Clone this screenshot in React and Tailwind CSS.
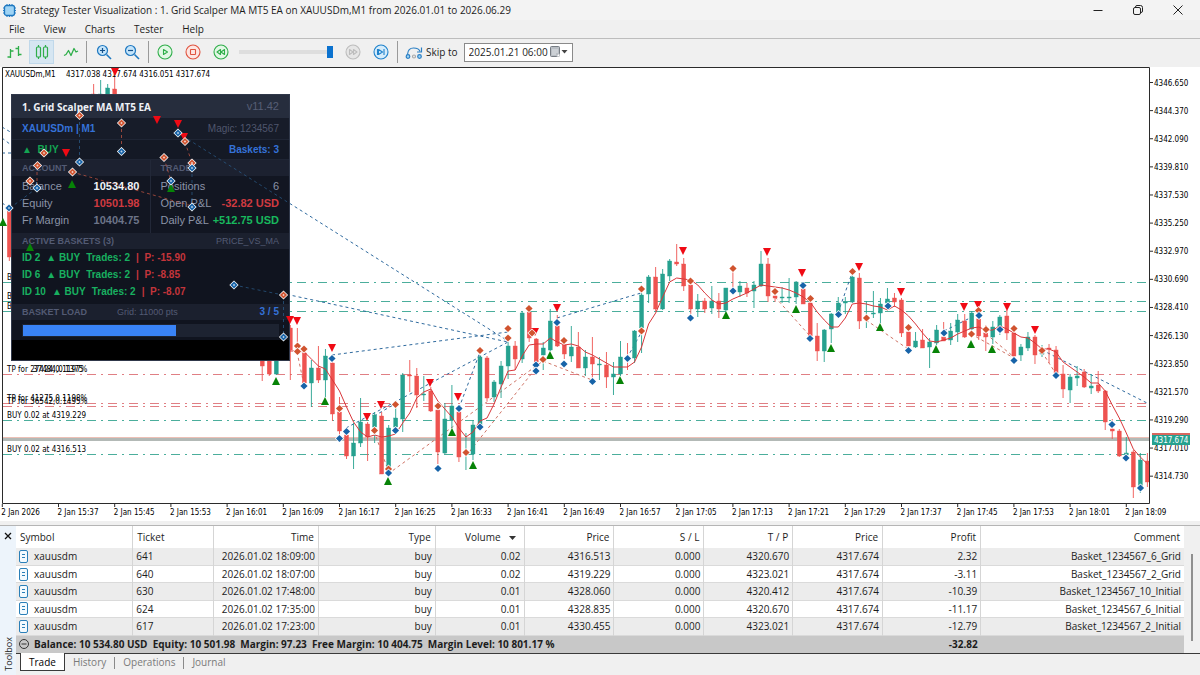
import { useState } from "react";

const FIRST_BAR_X = 2.3;
const BAR_STEP = 7.025;

const UP = "#26a18f";
const DOWN = "#ee5350";

// [bar, high, body top, body bottom, low, rising]
const CANDLES = [
  [1, 205, 211, 257, 261, 0],
  [13, 84, 94, 110, 112, 0],
  [14, 80, 94, 112, 116, 1],
  [15, 84, 88, 104, 110, 1],
  [16, 74, 89, 104, 112, 0],
  [37, 340, 346, 366, 381, 0],
  [38, 345, 355, 374, 376, 0],
  [39, 340, 350, 374, 375, 1],
  [41, 325, 328, 350, 380, 0],
  [42, 328, 349, 351, 353, 0],
  [43, 350, 353, 383, 384, 0],
  [44, 360, 368, 383, 407, 1],
  [45, 346, 368, 380, 383, 0],
  [46, 349, 356, 380, 397, 1],
  [47, 360, 363, 414, 421, 0],
  [48, 397, 412, 431, 435, 0],
  [49, 430, 435, 456, 459, 0],
  [50, 423, 443, 456, 469, 1],
  [51, 398, 422, 443, 447, 1],
  [52, 422, 424, 437, 461, 0],
  [53, 412, 415, 427, 443, 1],
  [54, 412, 416, 474, 474, 0],
  [55, 425, 428, 467, 470, 1],
  [56, 405, 418, 427, 432, 1],
  [57, 373, 375, 419, 432, 1],
  [58, 360, 375, 376, 392, 0],
  [59, 368, 376, 395, 408, 0],
  [60, 376, 394, 395, 401, 1],
  [61, 387, 391, 411, 412, 0],
  [62, 408, 410, 452, 464, 0],
  [63, 403, 419, 453, 454, 1],
  [64, 385, 406, 420, 428, 1],
  [65, 411, 412, 457, 462, 0],
  [66, 433, 452, 453, 470, 1],
  [67, 420, 425, 454, 460, 1],
  [68, 355, 357, 426, 427, 1],
  [69, 356, 358, 398, 401, 0],
  [70, 380, 382, 397, 402, 1],
  [71, 361, 366, 384, 398, 1],
  [72, 342, 346, 366, 379, 1],
  [73, 341, 346, 359, 370, 0],
  [74, 312, 313, 359, 363, 1],
  [75, 309, 312, 338, 342, 0],
  [76, 338, 339, 362, 365, 0],
  [77, 342, 348, 355, 370, 1],
  [78, 309, 321, 350, 351, 1],
  [79, 315, 326, 346, 347, 0],
  [80, 344, 345, 354, 359, 0],
  [81, 326, 347, 356, 362, 1],
  [82, 332, 347, 368, 368, 0],
  [83, 350, 357, 368, 376, 1],
  [84, 337, 357, 364, 378, 0],
  [85, 357, 364, 365, 380, 1],
  [86, 352, 365, 377, 388, 0],
  [87, 362, 374, 377, 395, 1],
  [88, 341, 357, 374, 376, 1],
  [89, 343, 358, 359, 370, 0],
  [90, 330, 331, 358, 363, 1],
  [91, 293, 295, 328, 353, 1],
  [92, 275, 277, 294, 303, 1],
  [93, 267, 277, 309, 311, 0],
  [94, 269, 274, 309, 310, 1],
  [95, 259, 261, 276, 281, 1],
  [96, 244, 262, 264, 266, 0],
  [97, 258, 264, 286, 291, 0],
  [98, 283, 285, 309, 314, 0],
  [99, 294, 301, 309, 317, 1],
  [100, 298, 301, 309, 313, 0],
  [101, 286, 301, 308, 314, 1],
  [102, 293, 301, 309, 318, 0],
  [103, 288, 288, 310, 311, 1],
  [104, 271, 289, 290, 291, 0],
  [105, 281, 286, 292, 297, 1],
  [106, 283, 288, 293, 297, 0],
  [107, 281, 285, 291, 308, 1],
  [108, 251, 264, 286, 287, 1],
  [109, 258, 264, 296, 302, 0],
  [110, 294, 296, 298, 302, 0],
  [111, 287, 297, 298, 303, 1],
  [112, 278, 297, 298, 303, 1],
  [113, 281, 282, 297, 304, 1],
  [114, 286, 289, 304, 304, 0],
  [115, 296, 303, 336, 338, 0],
  [116, 323, 336, 351, 361, 0],
  [117, 329, 330, 351, 362, 1],
  [118, 313, 314, 329, 343, 1],
  [119, 297, 303, 313, 314, 1],
  [120, 297, 302, 303, 314, 1],
  [121, 275, 277, 302, 303, 1],
  [122, 273, 278, 321, 329, 0],
  [123, 301, 319, 320, 328, 1],
  [124, 291, 313, 314, 318, 1],
  [125, 298, 304, 313, 323, 1],
  [126, 288, 299, 303, 308, 1],
  [127, 293, 298, 302, 307, 0],
  [128, 298, 300, 333, 337, 0],
  [129, 330, 332, 346, 348, 0],
  [130, 332, 341, 347, 348, 1],
  [131, 329, 340, 348, 348, 0],
  [132, 338, 342, 347, 368, 1],
  [133, 325, 330, 343, 345, 1],
  [134, 322, 337, 341, 341, 0],
  [135, 323, 331, 340, 345, 1],
  [136, 314, 320, 332, 342, 1],
  [137, 314, 321, 337, 338, 0],
  [138, 311, 313, 329, 330, 1],
  [139, 317, 319, 336, 340, 0],
  [140, 325, 333, 337, 351, 0],
  [141, 321, 327, 337, 344, 1],
  [142, 315, 317, 327, 335, 1],
  [143, 310, 316, 333, 340, 0],
  [144, 328, 333, 356, 359, 0],
  [145, 344, 347, 355, 361, 1],
  [146, 332, 337, 348, 351, 1],
  [147, 335, 337, 355, 364, 0],
  [148, 345, 352, 354, 357, 1],
  [149, 344, 348, 349, 363, 0],
  [150, 346, 350, 373, 377, 0],
  [151, 365, 374, 389, 398, 0],
  [152, 374, 377, 390, 403, 1],
  [153, 366, 376, 378, 386, 1],
  [154, 369, 372, 387, 388, 0],
  [155, 374, 386, 388, 394, 1],
  [156, 371, 385, 391, 393, 0],
  [157, 390, 391, 422, 430, 0],
  [158, 419, 429, 431, 439, 0],
  [159, 429, 431, 456, 457, 0],
  [160, 437, 453, 455, 460, 1],
  [161, 450, 452, 487, 498, 0],
  [162, 453, 460, 487, 493, 1],
  [163, 453, 461, 482, 487, 0],
];

// moving average, one value for each bar from bar 40 on
const MA = [
  350, 351, 351, 352, 359, 366, 369, 380, 391, 407, 422, 432, 437, 435, 437, 436, 434, 423, 413, 398,
  392, 389, 401, 409, 417, 428, 437, 432, 421, 418, 404, 387, 371, 370, 356, 345, 344, 344, 338, 342,
  345, 344, 346, 352, 355, 359, 363, 367, 367, 367, 362, 347, 324, 313, 297, 282, 278, 279, 280, 285,
  293, 300, 304, 303, 299, 296, 293, 289, 285, 286, 287, 288, 290, 293, 297, 302, 312, 320, 327, 327,
  318, 304, 303, 304, 306, 307, 310, 306, 310, 316, 324, 333, 341, 342, 340, 338, 334, 331, 328, 327,
  330, 330, 326, 329, 333, 337, 338, 343, 349, 349, 352, 362, 367, 372, 377, 383, 383, 391, 405, 418,
  433, 449, 457, 464,
];

const SELL_ARROWS = [
  [115, 72], [157, 120], [178, 124], [184, 137], [66, 153], [290, 320], [297, 321], [332, 348],
  [367, 417], [381, 405], [430, 383], [458, 397], [535, 332], [557, 308], [683, 251], [767, 252],
  [802, 273], [859, 267], [901, 292], [964, 307], [978, 305], [1007, 307], [1035, 330],
];

const BUY_ARROWS = [
  [72, 184], [171, 188], [30, 247], [3, 222], [276, 381], [325, 401], [388, 481], [452, 432],
  [473, 465], [550, 355], [620, 380], [726, 315], [796, 309], [831, 348], [880, 327], [936, 349],
  [971, 344], [992, 349],
];

const SELL_DEALS = [
  [79.5, 115.5], [121.5, 123], [44, 153], [37.5, 165.5], [30, 181], [72.5, 172], [164, 157.5],
  [185, 141.5], [192, 163], [283.5, 295], [297.5, 346], [297.5, 351.5], [304, 349], [339.5, 408.5],
  [374.5, 430.5], [395.5, 404.5], [388.5, 469], [438, 406], [466, 452.5], [480, 350.5], [508, 328.5],
  [508, 338], [529, 308.5], [532, 333], [543, 359.5], [564, 340.5], [641.5, 289], [641.5, 331],
  [690.5, 281], [733, 268.5], [775, 291.5], [810.5, 298.5], [852.5, 271.5], [866.5, 318],
  [908.5, 327.5], [978.5, 310.5], [971.5, 334], [986, 329.5], [1014, 328.5], [1042, 350.5],
];

const BUY_DEALS = [
  [178, 133], [79.5, 162], [121.5, 151.5], [37, 188], [171, 181], [192, 168], [192, 207], [9, 208],
  [234, 285], [283.5, 337], [304, 386], [332, 358.5], [339.5, 438.5], [346.5, 431.5], [388.5, 473],
  [395.5, 430.5], [438, 468.5], [459, 408.5], [480, 427], [536, 365], [536, 371], [564, 364],
  [557, 322.5], [592.5, 381.5], [627.5, 358.5], [690.5, 318], [733, 291], [803, 285.5], [810, 338.5],
  [838.5, 314.5], [888, 306], [908.5, 350.5], [944, 333], [979, 315.5], [1000, 329.5], [1014, 360.5],
  [1056, 375.5], [1112, 424.5], [1126, 458], [1140.5, 488],
];

const BUY_LINKS = [
  [178, 133, 508, 341], [234, 283, 508, 342], [332, 355, 508, 332], [346, 428, 508, 342],
  [459, 408, 480, 352], [557, 318, 641, 293], [627, 358, 641, 333], [838, 313, 852, 273],
  [1042, 350, 1149, 404], [2, 127, 44, 152], [2, 138, 37, 165], [2, 153, 44, 153], [2, 203, 10, 208],
  [944, 331, 978, 314], [374, 416, 395, 404],
];

const SELL_LINKS = [
  [388, 474, 543, 361], [466, 456, 536, 368], [297, 352, 304, 385], [543, 361, 592, 380],
  [775, 297, 810, 336], [866, 320, 908, 349], [971, 334, 1014, 358], [986, 334, 1014, 357],
  [1042, 352, 1056, 374], [374, 431, 388, 470],
];

const PANEL_BUY_LINKS = [
  [79.5, 116, 79.5, 162], [178, 133, 289, 203], [234, 285, 283, 295], [283.5, 295, 283.5, 337],
  [10, 208, 37, 188], [192, 168, 192, 207],
];

const PANEL_SELL_LINKS = [
  [121.5, 123, 121.5, 151], [185, 142, 192, 163], [72, 172, 192, 206], [164, 158, 171, 181],
  [37, 166, 37, 188],
];

const PRICES = [
  "4346.650", "4344.370", "4342.090", "4339.810", "4337.530", "4335.250", "4332.970", "4330.690",
  "4328.410", "4326.130", "4323.850", "4321.570", "4319.290", "4317.010", "4314.730",
];

const TIMES = [
  "2026", "15:37", "15:45", "15:53", "16:01", "16:09", "16:17", "16:25", "16:33", "16:41", "16:49",
  "16:57", "17:05", "17:13", "17:21", "17:29", "17:37", "17:45", "17:53", "18:01", "18:09",
];

const COLUMNS = [
  { label: "Symbol", width: "w-[10%]", align: "text-left" },
  { label: "Ticket", width: "w-[6.9%]", align: "text-left" },
  { label: "Time", width: "w-[9%]", align: "text-right" },
  { label: "Type", width: "w-[10%]", align: "text-right" },
  { label: "Volume", width: "w-[7.6%]", align: "text-right", sorted: true },
  { label: "Price", width: "w-[7.7%]", align: "text-right" },
  { label: "S / L", width: "w-[7.7%]", align: "text-right" },
  { label: "T / P", width: "w-[7.6%]", align: "text-right" },
  { label: "Price", width: "w-[7.7%]", align: "text-right" },
  { label: "Profit", width: "w-[8.4%]", align: "text-right" },
  { label: "Comment", width: "w-[17.4%]", align: "text-right" },
];

const TRADES = [
  ["xauusdm", "641", "2026.01.02 18:09:00", "buy", "0.02", "4316.513", "0.000", "4320.670", "4317.674", "2.32", "Basket_1234567_6_Grid"],
  ["xauusdm", "640", "2026.01.02 18:07:00", "buy", "0.02", "4319.229", "0.000", "4323.021", "4317.674", "-3.11", "Basket_1234567_2_Grid"],
  ["xauusdm", "630", "2026.01.02 17:48:00", "buy", "0.01", "4328.060", "0.000", "4320.412", "4317.674", "-10.39", "Basket_1234567_10_Initial"],
  ["xauusdm", "624", "2026.01.02 17:35:00", "buy", "0.01", "4328.835", "0.000", "4320.670", "4317.674", "-11.17", "Basket_1234567_6_Initial"],
  ["xauusdm", "617", "2026.01.02 17:23:00", "buy", "0.01", "4330.455", "0.000", "4323.021", "4317.674", "-12.79", "Basket_1234567_2_Initial"],
];

const BASKETS = [
  { id: 2, trades: 2, profit: "-15.90" },
  { id: 6, trades: 2, profit: "-8.85" },
  { id: 10, trades: 2, profit: "-8.07" },
];

const barX = (bar) => FIRST_BAR_X + bar * BAR_STEP;

function TitleBar() {
  return (
    <header className="flex h-5 items-center bg-[#f3f3f3] pl-[3px] pr-4 text-[10px]">
      <svg width="13" height="13" viewBox="0 0 13 13" className="mr-[5px]">
        <path d="M4 0v13M6.5 0v13M9 0v13M0 4h13M0 6.5h13M0 9h13" stroke="#2a7fc4" strokeWidth="1" />
        <rect x="1.5" y="1.5" width="10" height="10" rx="2" fill="#9fd4f5" stroke="#1f78c0" strokeWidth="1.3" />
      </svg>
      <h1>Strategy Tester Visualization : 1. Grid Scalper MA MT5 EA on XAUUSDm,M1 from 2026.01.01 to 2026.06.29</h1>
      <div className="ml-auto flex items-center gap-7">
        <button aria-label="Minimize">
          <svg width="12" height="12" viewBox="0 0 12 12"><path d="M1.5 6.5h9" stroke="#222" /></svg>
        </button>
        <button aria-label="Restore">
          <svg width="12" height="12" viewBox="0 0 12 12" fill="none" stroke="#222">
            <rect x="1.5" y="3.5" width="7" height="7" rx="1.5" />
            <path d="M3.5 3.5V3Q3.5 1.5 5 1.5h3.5Q10.5 1.5 10.5 3.5V7Q10.5 8.5 9 8.5" />
          </svg>
        </button>
        <button aria-label="Close">
          <svg width="12" height="12" viewBox="0 0 12 12"><path d="M1.5 1.5l9 9m0-9l-9 9" stroke="#222" /></svg>
        </button>
      </div>
    </header>
  );
}

function MenuBar() {
  return (
    <nav className="flex h-[18px] items-center gap-px text-[10px]">
      {["File", "View", "Charts", "Tester", "Help"].map((item) => (
        <button key={item} className="px-[9px]">{item}</button>
      ))}
    </nav>
  );
}

function RoundIcon({ color, fill, children }) {
  return (
    <svg width="16" height="16" viewBox="0 0 16 16" fill="none" stroke={color} strokeWidth="1.1" strokeLinejoin="round">
      <circle cx="8" cy="8" r="7" fill={fill} />
      {children}
    </svg>
  );
}

function ZoomIcon({ plus }) {
  return (
    <svg width="16" height="16" viewBox="0 0 16 16" fill="none" stroke="#1f78c0" strokeWidth="1.2">
      <path d="M10.5 10.5l4.5 4.5" strokeWidth="1.6" />
      <circle cx="6.5" cy="6.5" r="5" fill="#c4e4fa" />
      <path d={plus ? "M4 6.5h5M6.5 4v5" : "M4 6.5h5"} stroke="#14508a" />
    </svg>
  );
}

function Toolbar() {
  const [position, setPosition] = useState(100);
  const [date, setDate] = useState("2025.01.21 06:00");

  return (
    <div className="flex h-7 items-center border-t border-[#bdbdbd] bg-[#f0f0f0] pb-px pl-[2px] text-[10px]">
      <button aria-label="Bar chart" className="flex h-6 w-[25px] items-center justify-center">
        <svg width="17" height="16" viewBox="0 0 17 16" fill="none" stroke="#2fae4a" strokeWidth="1.3">
          <path d="M4.5 5v9M4.5 7h3M1.5 13h3M12.5 2v10M9.5 4.5h3M12.5 10.5h3" />
        </svg>
      </button>
      <button aria-label="Candlesticks" className="ml-[2px] flex h-6 w-[25px] items-center justify-center border border-[#c0d8ea] bg-[#d6e6f2]">
        <svg width="16" height="16" viewBox="0 0 16 16" fill="none" stroke="#2fae4a" strokeWidth="1.2">
          <path d="M4.5 1v2M4.5 13v2M11.5 1v2M11.5 13v2" />
          <rect x="2.5" y="3" width="4" height="10" rx="1" />
          <rect x="9.5" y="3" width="4" height="10" rx="1" />
        </svg>
      </button>
      <button aria-label="Line chart" className="ml-1 flex h-6 w-[25px] items-center justify-center">
        <svg width="16" height="12" viewBox="0 0 16 12" fill="none" stroke="#2fae4a" strokeWidth="1.3" strokeLinejoin="round">
          <path d="M1 9.5l2-1 2.500-4 2.500 5 3-7 2 3.500 2-1" />
        </svg>
      </button>
      <div className="mx-[3px] h-[22px] w-px bg-[#9a9a9a]" />
      <button aria-label="Zoom in" className="flex w-7 justify-center"><ZoomIcon plus /></button>
      <button aria-label="Zoom out" className="flex w-7 justify-center"><ZoomIcon /></button>
      <div className="mx-[2px] h-[22px] w-px bg-[#9a9a9a]" />
      <button aria-label="Play" className="flex w-7 justify-center">
        <RoundIcon color="#2fae4a" fill="#e2f7e5"><path d="M6.5 5.5v5l4-2.500z" /></RoundIcon>
      </button>
      <button aria-label="Stop" className="flex w-7 justify-center">
        <RoundIcon color="#e0533f" fill="#fde6e2"><rect x="5.5" y="5.5" width="5" height="5" rx="0.5" /></RoundIcon>
      </button>
      <button aria-label="Slow down" className="flex w-7 justify-center">
        <RoundIcon color="#2fae4a" fill="#e2f7e5"><path d="M7.5 5.5v5L4 8zM11.5 5.5v5L8 8z" /></RoundIcon>
      </button>
      <input
        type="range"
        aria-label="Speed"
        value={position}
        onChange={(e) => setPosition(e.target.value)}
        className="ml-1 h-3 w-[94px] appearance-none bg-transparent [&::-webkit-slider-runnable-track]:h-1 [&::-webkit-slider-runnable-track]:bg-[#dedede] [&::-webkit-slider-thumb]:-mt-1 [&::-webkit-slider-thumb]:h-3 [&::-webkit-slider-thumb]:w-[6px] [&::-webkit-slider-thumb]:appearance-none [&::-webkit-slider-thumb]:bg-[#0b72cf]"
      />
      <button aria-label="Speed up" disabled className="ml-[6px] flex w-7 justify-center">
        <RoundIcon color="#bdbdbd" fill="#e6e6e6"><path d="M4.5 5.5v5L8 8zM8.500 5.500v5L12 8z" /></RoundIcon>
      </button>
      <button aria-label="Next bar" className="flex w-7 justify-center">
        <RoundIcon color="#1f82cc" fill="#d5ecfb"><path d="M4.5 5v6M5.500 5.500v5L9.500 8zM11 5v6" /></RoundIcon>
      </button>
      <div className="ml-[2px] mr-[7px] h-[22px] w-px bg-[#9a9a9a]" />
      <label htmlFor="skip-date" className="flex items-center gap-[3px]">
        <svg width="18" height="15" viewBox="0 0 18 15" fill="none" stroke="#2a7fc4" strokeWidth="1.2">
          <path d="M2.5 9.5Q3 3 8.500 3T15 6.500" />
          <path d="M16.5 2.500v4.500h-4.500" />
          <circle cx="3" cy="11.5" r="1.8" fill="#9fd4f5" />
          <circle cx="9" cy="11.5" r="1.5" stroke="#a8a8a8" />
          <circle cx="14.5" cy="11.5" r="1.8" fill="#9fd4f5" />
        </svg>
        Skip to
      </label>
      <div className="ml-[6px] flex h-[19px] items-center border border-[#8a8a8a] bg-white pl-1">
        <input
          id="skip-date"
          type="text"
          value={date}
          onChange={(e) => setDate(e.target.value)}
          className="w-[81px] bg-transparent outline-none"
        />
        <button aria-label="Open calendar" className="mr-1">
          <svg width="18" height="12" viewBox="0 0 18 12">
            <rect x="0.5" y="0.5" width="9" height="10" rx="1" fill="#b9bec4" stroke="#777d84" />
            <path d="M2 4h6M2 6h6M2 8h4" stroke="#dfe3e7" />
            <path d="M6.5 10.500l3-3v3z" fill="#fff" />
            <path d="M11.5 4h6l-3 3.500z" fill="#444" />
          </svg>
        </button>
      </div>
    </div>
  );
}

function Links({ items, color, opacity = 1 }) {
  return (
    <g stroke={color} strokeDasharray="3 3" opacity={opacity}>
      {items.map(([x1, y1, x2, y2]) => (
        <line key={`${x1}-${y1}-${x2}`} x1={x1} y1={y1} x2={x2} y2={y2} />
      ))}
    </g>
  );
}

function Level({ y, color, label }) {
  return (
    <>
      <line x1="3" x2="1149" y1={y} y2={y} stroke={color} strokeDasharray="9 5 2 5" />
      {label && <text x="7" y={y - 3}>{label}</text>}
    </>
  );
}

function PriceChart() {
  const maPoints = MA.map((y, i) => `${barX(i + 40)},${y}`).join(" ");

  return (
    <svg viewBox="0 67 1200 454" className="block h-auto w-full bg-white font-['DejaVu_Sans_Condensed','DejaVu_Sans',sans-serif] text-[8px]">
      <Level y={282.5} color="#4bae9c" label="BUY 0.01 at 4330.455" />
      <Level y={301.5} color="#4bae9c" label="BUY 0.01 at 4328.835" />
      <Level y={311.5} color="#4bae9c" label="BUY 0.01 at 4328.060" />
      <Level y={374.5} color="#e07f84" />
      <Level y={403.5} color="#e07f84" />
      <Level y={406.5} color="#e07f84" />
      <Level y={420.5} color="#4bae9c" label="BUY 0.02 at 4319.229" />
      <Level y={454.5} color="#4bae9c" label="BUY 0.02 at 4316.513" />
      <rect x="3" y="437" width="1146" height="1" fill="#ecc0b6" />
      <rect x="3" y="438" width="1146" height="3" fill="#b3b9b6" />

      {/* labels of close levels print over one another */}
      <text x="7" y="372">TP for 27424,0.1197%</text>
      <text x="33" y="372">37484,0.1375</text>
      <text x="7" y="401">TP for 41275,0.1198%</text>
      <text x="7" y="404">TP for 36542,0.1495%</text>

      <Links items={BUY_LINKS} color="#2f6a9e" />
      <Links items={SELL_LINKS} color="#cf7466" />

      {CANDLES.map(([bar, high, top, bottom, low, rising]) => (
        <g key={bar} fill={rising ? UP : DOWN} stroke={rising ? UP : DOWN}>
          <line x1={barX(bar)} x2={barX(bar)} y1={high} y2={low} strokeWidth="0.9" />
          <rect x={barX(bar) - 2} y={top} width="4" height={bottom - top} strokeWidth="0.4" />
        </g>
      ))}
      <polyline points={maPoints} fill="none" stroke="#d9363a" strokeWidth="1" />

      <rect x="1150" y="68" width="50" height="453" fill="#fff" />
      <path d="M2.5 67.5H1149.5V503.5H2.5z" fill="none" stroke="#2b2b2b" />
      {PRICES.map((price, i) => (
        <g key={price}>
          <line x1="1150" x2="1153" y1={82.5 + i * 28.12} y2={82.5 + i * 28.12} stroke="#2b2b2b" />
          <text x="1154" y={85.5 + i * 28.12}>{price}</text>
        </g>
      ))}
      <rect x="1152" y="433" width="38" height="3" fill="#d9675f" />
      <rect x="1152" y="435" width="38" height="10" fill="#26a18f" />
      <text x="1154" y="443" fill="#fff">4317.674</text>

      {TIMES.map((time, i) => (
        <g key={time}>
          <line x1={barX(i * 8)} x2={barX(i * 8)} y1="504" y2="507" stroke="#2b2b2b" />
          <text x={barX(i * 8) - 1} y="515">2 Jan {time}</text>
        </g>
      ))}
      <text x="5" y="77">XAUUSDm,M1</text>
      <text x="66" y="77">4317.038 4317.674 4316.051 4317.674</text>
    </svg>
  );
}

const diamond = (x, y, r) => `M${x} ${y - r}L${x + r} ${y}L${x} ${y + r}L${x - r} ${y}z`;

function Diamonds({ items, color }) {
  return items.map(([x, y]) => {
    const overPanel = x < 290 && y < 340;
    return (
      <g key={`${x}-${y}`}>
        <path d={diamond(x, y, 4.6)} fill="#fff" />
        <path d={diamond(x, y, 3.6)} fill={color} />
        {overPanel && <path d={diamond(x, y, 1.2)} fill="#fff" opacity="0.7" />}
      </g>
    );
  });
}

// deals are painted above the info panel
function DealMarkers() {
  return (
    <svg viewBox="0 67 1200 454" aria-hidden="true" className="pointer-events-none absolute inset-0 h-full w-full">
      <Links items={PANEL_BUY_LINKS} color="#2f6a9e" opacity={0.6} />
      <Links items={PANEL_SELL_LINKS} color="#cf5a45" opacity={0.7} />
      {SELL_ARROWS.map(([x, y]) => (
        <path key={`${x}-${y}`} d={`M${x - 4} ${y - 4}h8l-4 8z`} fill="#f00a14" />
      ))}
      {BUY_ARROWS.map(([x, y]) => (
        <path key={`${x}-${y}`} d={`M${x - 4} ${y + 4}h8l-4 -8z`} fill="#078307" />
      ))}
      <Diamonds items={SELL_DEALS} color="#d0532f" />
      <Diamonds items={BUY_DEALS} color="#1763a8" />
    </svg>
  );
}

function Stat({ label, value, tone }) {
  return (
    <div className="flex h-[17px] items-center justify-between">
      <dt className="text-[#8b93a7]">{label}</dt>
      <dd className={tone}>{value}</dd>
    </div>
  );
}

function InfoPanel() {
  return (
    <section className="absolute left-[11px] top-[27px] w-[279px] border border-[#30384a] bg-black font-['Liberation_Sans',Arial,sans-serif] text-[11px] leading-none">
      <div className="flex h-[23px] items-center justify-between bg-[#262d3d] px-[10px]">
        <h2 className="font-['Open_Sans',sans-serif] text-[10px] font-bold text-[#eef1f6]">1. Grid Scalper MA MT5 EA</h2>
        <span className="text-[#565e75]">v11.42</span>
      </div>
      <div className="flex h-[21px] items-center justify-between bg-[#171c29] px-[10px] text-[10px]">
        <span className="font-bold text-[#3572d8]">XAUUSDm | M1</span>
        <span className="text-[#4f566d]">Magic: 1234567</span>
      </div>
      <div className="flex h-5 items-center justify-between border-t border-[#1f2534] bg-[#141925] px-[10px] text-[10px] font-bold">
        <span className="text-[#13a352]">▲&nbsp; BUY</span>
        <span className="text-[#3572d8]">Baskets: 3</span>
      </div>
      <div className="grid grid-cols-2 border-t border-[#1f2534] bg-[#121622]">
        <div className="border-r border-[#222838]">
          <h3 className="flex h-4 items-center bg-[#1c2130] px-[10px] text-[9px] font-bold text-[#535b74]">ACCOUNT</h3>
          <dl className="px-[10px] pb-1 pt-[2px]">
            <Stat label="Balance" value="10534.80" tone="font-bold text-[#f1f3f7]" />
            <Stat label="Equity" value="10501.98" tone="font-bold text-[#cf3a40]" />
            <Stat label="Fr Margin" value="10404.75" tone="font-bold text-[#6c7488]" />
          </dl>
        </div>
        <div>
          <h3 className="flex h-4 items-center bg-[#1c2130] px-[10px] text-[9px] font-bold text-[#535b74]">TRADE</h3>
          <dl className="px-[10px] pb-1 pt-[2px]">
            <Stat label="Positions" value="6" tone="text-[#8b93a7]" />
            <Stat label="Open P&L" value="-32.82 USD" tone="font-bold text-[#cf3a40]" />
            <Stat label="Daily P&L" value="+512.75 USD" tone="font-bold text-[#18b85d]" />
          </dl>
        </div>
      </div>
      <div className="flex h-4 items-center justify-between bg-[#1b202e] px-[10px] text-[9px] text-[#535b74]">
        <h3 className="font-bold">ACTIVE BASKETS (3)</h3>
        <span>PRICE_VS_MA</span>
      </div>
      <ul className="bg-[#10141f] px-[10px] pb-1 text-[10px] font-bold">
        {BASKETS.map((basket) => (
          <li key={basket.id} className="flex h-[17px] items-center gap-[6px] text-[#18b060]">
            <span>ID {basket.id}</span>
            <span>▲ BUY</span>
            <span>Trades: {basket.trades}</span>
            <span className="text-[#c4353b]">|&nbsp; P: {basket.profit}</span>
          </li>
        ))}
      </ul>
      <div className="flex h-4 items-center bg-[#1b202e] px-[10px] text-[9px] text-[#535b74]">
        <h3 className="font-bold">BASKET LOAD</h3>
        <span className="ml-[30px]">Grid: 11000 pts</span>
        <span className="ml-auto text-[10px] font-bold text-[#3572d8]">3 / 5</span>
      </div>
      <div className="bg-[#10141f] px-[10px] pb-[3px] pt-1">
        <div className="h-[13px] bg-[#1d2331] p-px">
          <div className="h-full w-[60%] bg-[#3983f6]" />
        </div>
      </div>
      <div className="h-5" />
    </section>
  );
}

function TradeTable() {
  return (
    <table className="h-[127px] w-full table-fixed border-collapse whitespace-nowrap text-[10px] leading-none">
      <thead>
        <tr className="h-[22px] bg-white">
          {COLUMNS.map((column, i) => (
            <th key={i} className={`${column.width} ${column.align} border-r border-[#d5d5d5] px-1 font-normal last:border-r-0`}>
              {column.label}
              {column.sorted && (
                <svg width="7" height="4" viewBox="0 0 7 4" className="mx-1 ml-2 inline-block align-middle">
                  <path d="M0 0h7l-3.500 4z" fill="#333" />
                </svg>
              )}
            </th>
          ))}
        </tr>
      </thead>
      <tbody>
        {TRADES.map((trade) => (
          <tr key={trade[1]} className="h-[17px] border-b border-[#dadada] bg-white odd:bg-[#ececec]">
            {trade.map((value, i) => (
              <td key={i} className={`${COLUMNS[i].align} border-r border-[#d5d5d5] px-[3px] py-0 last:border-r-0`}>
                {i === 0 ? (
                  <span className="flex items-center gap-[5px]">
                    <svg width="10" height="13" viewBox="0 0 10 13" fill="none" stroke="#2a7fb8">
                      <rect x="0.5" y="0.5" width="8" height="12" rx="1.5" fill="#f3fafe" />
                      <path d="M3 4.5h3M3 7.5h3" />
                    </svg>
                    {value}
                  </span>
                ) : value}
              </td>
            ))}
          </tr>
        ))}
      </tbody>
      <tfoot>
        <tr className="h-[18px] bg-[#c8c8c8] font-bold">
          <td colSpan={9} className="px-[3px] py-0">
            <span className="flex items-center gap-[5px]">
              <svg width="10" height="10" viewBox="0 0 10 10" fill="none" stroke="#333">
                <circle cx="5" cy="5" r="4.5" />
                <path d="M2.5 5h5" />
              </svg>
              Balance: 10 534.80 USD&nbsp; Equity: 10 501.98&nbsp; Margin: 97.23&nbsp; Free Margin: 10 404.75&nbsp; Margin Level: 10 801.17 %
            </span>
          </td>
          <td className="px-[3px] py-0 text-right">-32.82</td>
          <td />
        </tr>
      </tfoot>
    </table>
  );
}

function Toolbox() {
  return (
    <section className="flex border-t border-[#b5b5b5]">
      <div className="flex w-4 flex-col items-center justify-between bg-[#edf4fb] pb-1 pt-[6px] text-[9px] leading-none">
        <button aria-label="Close toolbox">
          <svg width="8" height="8" viewBox="0 0 8 8"><path d="M1 1l6 6m0-6l-6 6" stroke="#111" strokeWidth="1.3" /></svg>
        </button>
        <span className="rotate-180 [writing-mode:vertical-rl]">Toolbox</span>
      </div>
      <div className="min-w-0 flex-1">
        <div className="flex border-b border-[#3a3a3a]">
          <div className="min-w-0 flex-1"><TradeTable /></div>
          <div className="flex w-4 justify-center pb-3 pt-7">
            <div className="w-[2px] bg-[#8f8f8f]" />
          </div>
        </div>
        <div role="tablist" className="flex h-[21px] items-start pl-1 text-[10px] leading-none text-[#7a7a7a]">
          <button role="tab" aria-selected="true" className="-mt-px h-[18px] border border-t-0 border-[#3a3a3a] bg-white px-2 text-black">Trade</button>
          <button role="tab" className="h-4 px-2">History</button>
          <span className="mt-[3px] h-3 w-px bg-[#8a8a8a]" />
          <button role="tab" className="h-4 px-2">Operations</button>
          <span className="mt-[3px] h-3 w-px bg-[#8a8a8a]" />
          <button role="tab" className="h-4 px-2">Journal</button>
        </div>
      </div>
    </section>
  );
}

function App() {
  return (
    <main className="min-h-screen bg-[#f0f0f0] font-['Open_Sans','Noto_Sans',sans-serif] text-[#1c1c1c]">
      <TitleBar />
      <MenuBar />
      <Toolbar />
      <div className="relative mt-px">
        <PriceChart />
        <InfoPanel />
        <DealMarkers />
      </div>
      <div className="h-1" />
      <Toolbox />
    </main>
  );
}

export default App;
